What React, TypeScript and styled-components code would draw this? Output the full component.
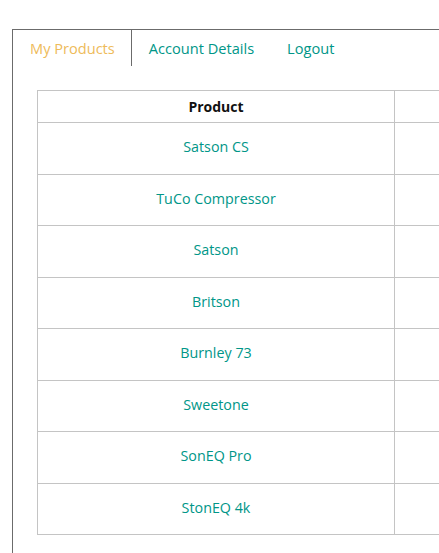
import React from "react";
import styled, { createGlobalStyle } from "styled-components";

const Global = createGlobalStyle`
  html, body { margin: 0; padding: 0; background: #fff; overflow: hidden; }
  body { font-family: "Open Sans", "DejaVu Sans", sans-serif; }
`;

const Page = styled.div`
  padding: 29px 0 0 12px;
  width: 800px;
`;

const Panel = styled.div`
  border-left: 1px solid #6b6b6b;
  border-top: 1px solid #6b6b6b;
  width: 700px;
  min-height: 560px;
`;

const Tabs = styled.nav`
  display: flex;
  height: 36px;
`;

const Tab = styled.a<{ $active?: boolean }>`
  display: flex;
  align-items: center;
  padding: 0 16px 1px 17px;
  font-size: 14.6px;
  color: ${(p) => (p.$active ? "#eebb5a" : "#009688")};
  border-right: ${(p) => (p.$active ? "1px solid #6b6b6b" : "none")};
  text-decoration: none;
`;

const Body = styled.div`
  padding: 24px 0 0 24px;
`;

const Table = styled.table`
  border-collapse: collapse;
  width: 620px;
  table-layout: fixed;
`;

const Th = styled.th<{ $w?: number }>`
  border: 1px solid #c4c4c4;
  height: 31px;
  padding: 0;
  font-size: 14px;
  font-weight: 700;
  color: #111;
  text-align: center;
  ${(p) => (p.$w ? `width: ${p.$w}px;` : "")}
`;

const Td = styled.td`
  border: 1px solid #c4c4c4;
  height: 50.5px;
  padding: 0;
  font-size: 14.3px;
  line-height: 18px;
  color: #009688;
  text-align: center;
`;

const CellText = styled.span`
  position: relative;
  top: -1px;
`;

const products = [
  "Satson CS",
  "TuCo Compressor",
  "Satson",
  "Britson",
  "Burnley 73",
  "Sweetone",
  "SonEQ Pro",
  "StonEQ 4k",
];

export default function App() {
  return (
    <>
      <Global />
      <Page>
        <Panel>
          <Tabs>
            <Tab $active>My Products</Tab>
            <Tab>Account Details</Tab>
            <Tab>Logout</Tab>
          </Tabs>
          <Body>
            <Table>
              <thead>
                <tr>
                  <Th $w={356}>Product</Th>
                  <Th></Th>
                </tr>
              </thead>
              <tbody>
                {products.map((p) => (
                  <tr key={p}>
                    <Td>
                      <CellText>{p}</CellText>
                    </Td>
                    <Td></Td>
                  </tr>
                ))}
              </tbody>
            </Table>
          </Body>
        </Panel>
      </Page>
    </>
  );
}
